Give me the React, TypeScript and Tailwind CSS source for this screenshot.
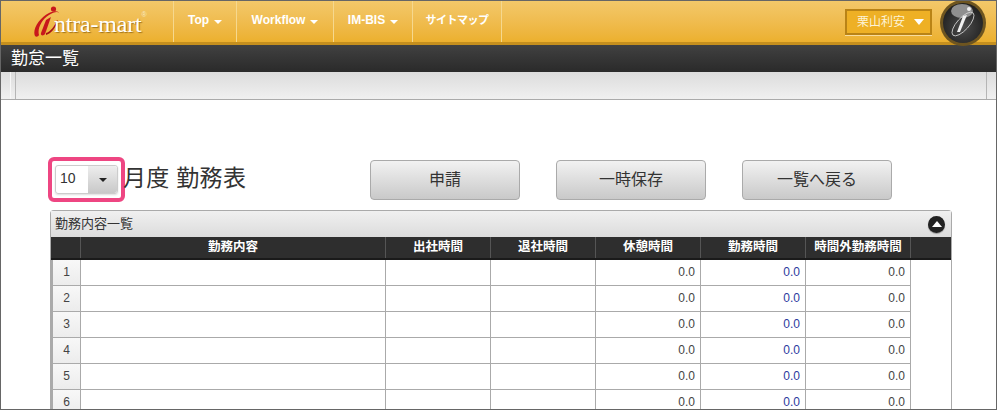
const FONT = "[font-family:'Liberation_Sans','Noto_Sans_CJK_JP',sans-serif]";

const navItems = [
  { label: "Top", width: "w-[63px]", caret: true, kana: false },
  { label: "Workflow", width: "w-[97px]", caret: true, kana: false },
  { label: "IM-BIS", width: "w-[79px]", caret: true, kana: false },
  { label: "サイトマップ", width: "w-[89px]", caret: false, kana: true },
];

const columns = [
  { label: "勤務内容", width: "w-[305px]" },
  { label: "出社時間", width: "w-[105px]" },
  { label: "退社時間", width: "w-[105px]" },
  { label: "休憩時間", width: "w-[105px]" },
  { label: "勤務時間", width: "w-[105px]" },
  { label: "時間外勤務時間", width: "w-[105px]" },
];

const rows = [1, 2, 3, 4, 5, 6];

function Caret({ className }: { className: string }) {
  return <span className={`inline-block h-0 w-0 border-x-[4px] border-t-[4px] border-x-transparent ${className}`} />;
}

function Logo() {
  return (
    <div className="flex h-[41px] w-[172px] items-center pl-[32px]">
      <svg width="30" height="33" viewBox="0 0 30 33" className="shrink-0">
        <path d="M2 31C-1 25 6 13 16 8C22 5 27 6 27 10C27 6 22 6 16 10C9 14 4 24 6 30C5 32 3 32 2 31Z" fill="#c8181c" />
        <circle cx="20.5" cy="4" r="2.6" fill="#c8181c" />
        <path d="M18 12L12 29C11 31 7 31 8 28L13 15Z" fill="#c8181c" />
        <path d="M13 28C17 27 22 21 24 15L25 16C23 22 18 29 13 30Z" fill="#a81216" />
      </svg>
      <span className="-ml-[9px] mt-[4px] font-['Liberation_Serif',serif] text-[24px] leading-none tracking-[-0.2px] text-white [text-shadow:1px_1px_1px_rgba(110,70,0,0.6)]">
        ntra-mart
      </span>
      <span className="-mt-[14px] text-[7px] leading-none text-[#f7e9c4]">®</span>
    </div>
  );
}

function ActionButton({ label }: { label: string }) {
  return (
    <button className="flex h-[40px] w-[150px] items-center justify-center rounded-[4px] border border-[#aaaaaa] bg-gradient-to-b from-[#f2f2f2] to-[#c9c9c9] text-[16px] text-[#333333]">
      {label}
    </button>
  );
}

export default function App() {
  return (
    <div className={`h-[410px] w-[997px] overflow-hidden border border-[#666666] bg-white ${FONT}`}>
      {/* Header */}
      <header className="flex h-[44px] border-b-[3px] border-[#c58f1e] bg-gradient-to-b from-[#f3c869] to-[#ecb02d]">
        <Logo />
        <nav className="flex h-full">
          {navItems.map((item) => (
            <div
              key={item.label}
              className={`flex items-center justify-center gap-[5px] border-l border-[#f6d88e] pb-[3px] font-bold text-white ${item.kana ? "text-[11px] tracking-[-0.5px]" : "text-[12px]"} ${item.width}`}
            >
              {item.label}
              {item.caret && <Caret className="mt-[3px] border-t-white" />}
            </div>
          ))}
          <div className="border-l border-[#f6d88e]" />
        </nav>
        <div className="ml-auto flex items-center gap-[8px] pr-[10px]">
          <div className="flex h-[26px] w-[87px] items-center justify-between border-2 border-[#b98316] bg-[#eeb025] pl-[10px] pr-[6px] text-[12px] text-[#fdf3d6] shadow-[0_1px_0_#f8dc9c]">
            栗山利安
            <Caret className="border-x-[5px] border-t-[6px] border-t-white" />
          </div>
          <svg width="46" height="46" viewBox="0 0 46 46" className="-mb-[2px] shrink-0">
            <defs>
              <radialGradient id="orb" cx="50%" cy="60%" r="60%">
                <stop offset="0%" stopColor="#4c4c4c" />
                <stop offset="100%" stopColor="#1f1f1f" />
              </radialGradient>
            </defs>
            <circle cx="23" cy="23" r="23" fill="#6e5520" />
            <circle cx="23" cy="23" r="20" fill="url(#orb)" />
            <ellipse cx="22" cy="11" rx="11" ry="7" fill="#8f8f8f" />
            <circle cx="29" cy="9" r="2" fill="#f0f0f0" />
            <path d="M27 15L20 32L17 32L23 16Z" fill="#f0f0f0" />
            <ellipse cx="23" cy="24" rx="15" ry="6" transform="rotate(-48 23 24)" fill="none" stroke="#d8d8d8" strokeWidth="0.8" />
          </svg>
        </div>
      </header>

      {/* Title bar */}
      <div className="flex h-[27px] items-center bg-gradient-to-b from-[#414141] to-[#2a2a2a] pl-[10px] text-[17px] text-white">
        勤怠一覧
      </div>

      {/* Toolbar strip */}
      <div className="flex h-[28px] border-b border-[#aaaaaa] bg-gradient-to-b from-[#dcdcdc] to-[#f0f0f0] pl-[9px] pr-[9px]">
        <div className="w-[6px] border-x border-l-[#f7f7f7] border-r-[#b5b5b5]" />
        <div className="ml-auto w-px bg-[#b5b5b5]" />
      </div>

      {/* Month selector and actions */}
      <div className="flex h-[110px] items-start pl-[47px] pt-[57px]">
        <div className="flex h-[45px] w-[77px] items-center justify-center rounded-[6px] border-[4px] border-[#ee4682]">
          <div className="flex h-[29px] w-[63px] rounded-[3px] border border-[#cccccc] shadow-[0_1px_2px_#dddddd]">
            <span className="flex-1 pb-[2px] pl-[4px] text-[14px] leading-[25px] text-[#333333]">10</span>
            <span className="flex w-[29px] items-center justify-center rounded-r-[3px] bg-gradient-to-b from-[#eeeeee] to-[#c8c8c8]">
              <Caret className="border-t-[#222222]" />
            </span>
          </div>
        </div>
        <h1 className="-ml-[2px] mt-[6px] w-[122px] shrink-0 whitespace-nowrap text-[23px] font-normal leading-[30px] tracking-[0.3px] text-[#333333]">
          月度 勤務表
        </h1>
        <div className="ml-[125px] mt-[3px] flex gap-[36px]">
          <ActionButton label="申請" />
          <ActionButton label="一時保存" />
          <ActionButton label="一覧へ戻る" />
        </div>
      </div>

      {/* Panel */}
      <section className="ml-[49px] w-[902px] rounded-t-[4px] border-x border-t border-[#aaaaaa]">
        <div className="flex h-[26px] items-center justify-between bg-gradient-to-b from-[#f0f0f0] to-[#dcdcdc] pl-[4px] pr-[6px] text-[13px] text-[#333333]">
          勤務内容一覧
          <span className="flex h-[17px] w-[17px] items-center justify-center rounded-full bg-[#222222] shadow-[0_1px_1px_#999999]">
            <Caret className="-mt-[1px] rotate-180 border-x-[5px] border-t-[6px] border-t-white" />
          </span>
        </div>
        <div className="flex h-[23px] border-b-2 border-[#1a1a1a] bg-[#2e2e2e]">
          <div className="w-[30px] border-r border-[#555555]" />
          {columns.map((col) => (
            <div
              key={col.label}
              className={`flex items-center justify-center border-r border-[#555555] text-[12.5px] font-bold text-white ${col.width}`}
            >
              {col.label}
            </div>
          ))}
        </div>
        {rows.map((row) => (
          <div key={row} className="flex h-[26px] text-[12px] text-[#444444]">
            <div className="flex w-[30px] items-center justify-center border-b border-l-2 border-r border-[#aaaaaa] bg-gradient-to-b from-[#f8f8f8] to-[#ececec] pb-[1px]">
              {row}
            </div>
            <div className="w-[305px] border-b border-r border-[#aaaaaa]" />
            <div className="w-[105px] border-b border-r border-[#aaaaaa]" />
            <div className="w-[105px] border-b border-r border-[#aaaaaa]" />
            <div className="flex w-[105px] items-center justify-end border-b border-r border-[#aaaaaa] pb-[1px] pr-[5px]">0.0</div>
            <div className="flex w-[105px] items-center justify-end border-b border-r border-[#aaaaaa] pb-[1px] pr-[5px] text-[#2b3a9e]">0.0</div>
            <div className="flex w-[105px] items-center justify-end border-b border-r border-[#aaaaaa] pb-[1px] pr-[5px]">0.0</div>
          </div>
        ))}
      </section>
    </div>
  );
}
